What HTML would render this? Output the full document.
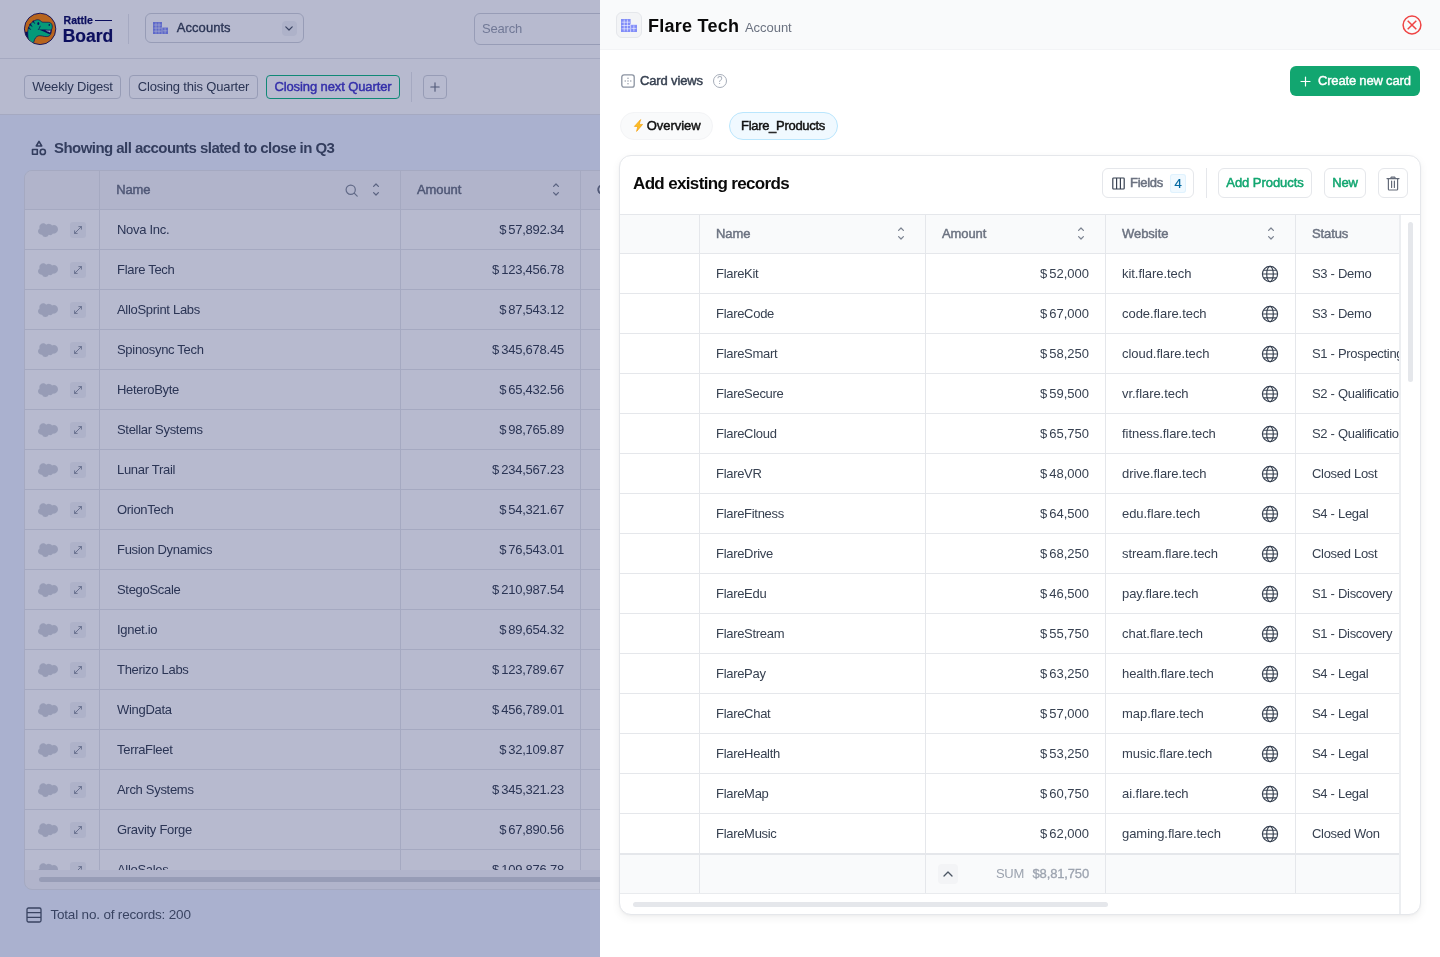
<!DOCTYPE html><html lang="en"><head><meta charset="utf-8"><title>Rattle Board</title><style>*{box-sizing:border-box;margin:0;padding:0}
html,body{width:1440px;height:957px;overflow:hidden;background:#ecf3ff;font-family:"Liberation Sans",sans-serif;font-size:13px;color:#374151;letter-spacing:-.3px}
svg{display:block}
i{font-style:normal}
#page{position:absolute;left:0;top:0;width:1440px;height:957px;background:#ecf3ff}
#overlay{position:absolute;left:0;top:0;width:1440px;height:957px;background:rgba(18,25,95,.3)}
#hdr{position:absolute;left:0;top:0;width:1440px;height:59px;background:#fff;border-bottom:1px solid #e5e7eb}
#logo{position:absolute;left:20px;top:9px}
#rattle{position:absolute;left:63.500px;top:13.700px;font-size:10.500px;font-weight:700;color:#0b0b5e;line-height:13px;letter-spacing:.05px;-webkit-text-stroke:.25px #0b0b5e}
#rline{position:absolute;left:95px;top:20px;width:17px;height:1px;background:#0b0b5e}
#board{position:absolute;left:62.700px;top:25.900px;font-size:17.500px;font-weight:700;color:#0b0b5e;line-height:20px;letter-spacing:0;-webkit-text-stroke:.2px #0b0b5e}
#hdiv{position:absolute;left:128px;top:14px;width:1px;height:30px;background:#e5e7eb}
#acct{position:absolute;left:145px;top:13px;width:159px;height:30px;border:1px solid #d1d5db;border-radius:6px;background:#fff}
#acct .bi{position:absolute;left:7px;top:8px;color:#818cf8}
#acct .at{position:absolute;left:30.800px;top:0;line-height:28px;font-size:13px;font-weight:400;color:#374151;letter-spacing:.05px;-webkit-text-stroke:.35px #374151}
#acct .chev{position:absolute;left:135.500px;top:6.500px;width:15px;height:15px;border-radius:4px;background:#f3f4f6;color:#4b5563}
#acct .chev svg{position:absolute;left:3.500px;top:5.200px}
#search{position:absolute;left:474px;top:13px;width:400px;height:32px;border:1px solid #d1d5db;border-radius:6px;background:#fff;color:#9ca3af;line-height:30px;padding-left:7px;font-size:13px;letter-spacing:-.2px}
#tabs{position:absolute;left:0;top:59px;width:1440px;height:56px;background:#fff;border-bottom:1px solid #e5e7eb}
.tab{position:absolute;top:16px;height:24px;border:1px solid #d1d5db;border-radius:4px;background:#fff;font-size:13px;line-height:22px;text-align:center;color:#374151;white-space:nowrap;letter-spacing:-.17px}
.tab.act{border-color:#10b981;color:#4338ca;letter-spacing:-.1px;-webkit-text-stroke:.45px #4338ca}
.tab.plus{color:#6b7280}
.tab.plus svg{position:absolute;left:6px;top:6px}
#tdiv{position:absolute;left:411px;top:13px;width:1px;height:30px;background:#e5e7eb}
#lhead{position:absolute;left:0;top:139px;height:18px;color:#434c5e}
#lhead svg{position:absolute;left:31px;top:1px}
#lhead span{position:absolute;left:54px;top:0;white-space:nowrap;font-size:15px;font-weight:700;line-height:18px;letter-spacing:-.55px;color:#434c5e}
#ltable{position:absolute;left:24px;top:170px;width:1400px;height:720px;border:1px solid #e5e7eb;border-radius:8px;background:#f6f7f9;overflow:hidden}
#lclip{position:absolute;left:0;top:0;width:1400px;height:699px;overflow:hidden}
.lrow{position:absolute;left:0;width:1400px;height:40px;border-bottom:1px solid #e5e7eb;background:#fff}
.lrow.lh{top:0;height:39px;background:#f6f7f9;color:#6b7280}
.lrow.lh>div{height:39px}
.lrow.lh span{line-height:38px}
.lrow>div{position:absolute;top:0;height:40px;border-right:1px solid #e5e7eb}
.lrow>div.c0>div{border:0}
.lrow span{position:absolute;top:0;line-height:39px;white-space:nowrap}
.lh span{-webkit-text-stroke:.45px currentColor;letter-spacing:-.1px}
.c0{left:0;width:75px}
.c1{left:75px;width:301px}
.c2{left:376px;width:180px}
.c3{left:556px;width:200px}
.c1 span{left:17px}
.lh .c1 span{left:16.200px}
.c2 span{left:16px}
.c3 span{left:16px}
.c2 span.amt{left:auto;right:16px;letter-spacing:-.22px}
.amt i{margin-right:2px}
.sf{position:absolute;left:13px;top:13px;width:20px;height:14px;color:#d1d5db}
.exp{position:absolute;left:45px;top:12px;width:16px;height:16px;border-radius:3px;background:#f3f4f6;color:#8b93a1}
.exp svg{position:absolute;left:3px;top:3px}
.sort{position:absolute;right:21px;top:12px;color:#7c8391}
.mag{position:absolute;right:42px;top:12.500px;color:#868d9a}
#lscroll{position:absolute;left:13.500px;top:706px;width:1200px;height:5px;border-radius:3px;background:#d1d5db}
#lfoot{position:absolute;left:0;top:906px;height:18px;color:#4b5563}
#lfoot svg{position:absolute;left:26px;top:1px}
#lfoot span{position:absolute;left:50.400px;top:0;line-height:18px;white-space:nowrap;font-size:13.500px;letter-spacing:-.18px}
/* panel */
#panel{position:absolute;left:600px;top:0;width:840px;height:957px;background:#fff}
#phdr{position:absolute;left:0;top:0;width:840px;height:50px;background:#f9fafb;border-bottom:1px solid #f3f4f6}
#pico{position:absolute;left:16px;top:12px;width:26px;height:26px;border:1px solid #e5e7eb;border-radius:6px;background:#f3f4f6;color:#818cf8}
#pico svg{position:absolute;left:4px;top:5.500px}
#ptitle{position:absolute;left:48px;top:13px;font-size:18px;font-weight:700;line-height:26px;color:#0a0a0a;letter-spacing:.25px;white-space:nowrap}
#psub{position:absolute;left:145px;top:19px;font-size:13px;line-height:18px;color:#6b7280;letter-spacing:-.05px}
#pclose{position:absolute;left:802px;top:15px;color:#ef4444}
#cv{position:absolute;left:0;top:71px;height:20px;color:#374151}
#cv svg{position:absolute;left:21px;top:3px;color:#8b93a1}
#cv span{position:absolute;left:40px;top:0;line-height:20px;white-space:nowrap;font-size:13px;letter-spacing:-.15px;-webkit-text-stroke:.45px currentColor}
#cv #qm{left:112.8px;top:2.8px;width:14px;height:14px;border:1px solid #a6adb9;border-radius:50%;font-size:10px;line-height:12px;text-align:center;color:#a6adb9;letter-spacing:0;-webkit-text-stroke:0}
#create{position:absolute;left:690px;top:66px;width:130px;height:30px;border-radius:6px;background:#12a670;color:#fff}
#create svg{position:absolute;left:10px;top:9.500px}
#create span{position:absolute;left:28px;top:0;line-height:30px;font-size:13px;white-space:nowrap;letter-spacing:-.18px;-webkit-text-stroke:.4px #fff}
.pill{position:absolute;top:112px;height:28px;border-radius:14px;font-size:13px;color:#111;white-space:nowrap}
.pill span{position:absolute;top:0;line-height:26px;-webkit-text-stroke:.45px #111}
#p1{left:20px;width:93px;background:#f9fafb;border:1px solid #f3f4f6}
#p1 svg{position:absolute;left:11.500px;top:5.500px}
#p1 span{left:25.800px;letter-spacing:-.05px}
#p2{left:129px;width:109px;background:#f0f9ff;border:1px solid #bae6fd}
#p2 span{left:11px}
#card{position:absolute;left:19px;top:155px;width:802px;height:760px;border:1px solid #e5e7eb;border-radius:12px;background:#fff;box-shadow:0 3px 8px rgba(0,0,0,.06),0 1px 2px rgba(0,0,0,.03)}
#ctitle{position:absolute;left:13px;top:16px;font-size:17px;font-weight:700;line-height:24px;color:#0a0a0a;letter-spacing:-.65px;white-space:nowrap}
.btn{position:absolute;top:12px;height:30px;border:1px solid #e5e7eb;border-radius:6px;background:#fff;font-size:13px;line-height:28px;text-align:center;white-space:nowrap;color:#6b7280;-webkit-text-stroke:.5px currentColor}
.btn.g{color:#12a670}
#bfields{left:482px;width:92px}
#bfields svg{position:absolute;left:9px;top:8px;color:#374151}
#bfields span{position:absolute;left:27px;top:0}
#bfields b{position:absolute;left:67px;top:5px;width:16px;height:19px;border-radius:3px;background:#f0f9ff;color:#0369a1;font-weight:400;line-height:19px;-webkit-text-stroke:.2px #0369a1;box-shadow:inset 0 0 0 1px #e0f2fe}
#bdiv{position:absolute;left:586px;top:12px;width:1px;height:30px;background:#e5e7eb}
#badd{left:598px;width:94px;letter-spacing:-.05px}
#bnew{left:704px;width:42px;letter-spacing:-.2px}
#btrash{left:758px;width:30px;color:#646b79}
#btrash svg{position:absolute;left:7px;top:7px}
#rt{position:absolute;left:0;top:58px;width:779px;height:701px;overflow:hidden;border-top:1px solid #e5e7eb}
#rvl{position:absolute;left:779px;top:59px;width:2px;height:699px;background:#eceef1}
#rtop{position:absolute;left:0;top:58px;width:800px;height:1px;background:#e5e7eb}
.rrow{position:absolute;left:0;width:800px;height:40px;border-bottom:1px solid #e5e7eb;background:#fff}
.rrow.rh{top:0;height:39px;background:#f9fafb;color:#6b7280}
.rrow.rh>div{height:39px}
.rrow.rh span{line-height:38px}
.rh span{-webkit-text-stroke:.45px currentColor;letter-spacing:-.1px}
.rrow.rf{background:#f9fafb;border-top:2px solid #e5e7eb;border-bottom:1px solid #e9ebee;height:41px}
.rrow.rf>div{height:38px}
.rrow.rf span{line-height:37px}
.rrow>div{position:absolute;top:0;height:40px;border-right:1px solid #e5e7eb}
.rrow span{position:absolute;top:0;line-height:39px;white-space:nowrap}
.d0{left:0;width:80px}
.d1{left:80px;width:226px}
.d2{left:306px;width:180px}
.d3{left:486px;width:190px}
.d4{left:676px;width:200px}
.d1 span,.d2 span,.d3 span,.d4 span{left:16px}
.d2 span.amt{left:auto;right:16px;letter-spacing:0}
.d3 span{letter-spacing:-.05px}
.globe{position:absolute;left:155px;top:11px;color:#374151}
.rf .up{left:12px!important;top:9px!important;width:20px;height:20px;border-radius:4px;background:#f3f4f6;color:#4b5563}
.rf .up svg{position:absolute;left:5px;top:7px}
.rf .sum{left:auto!important;right:81px;color:#9ca3af;font-size:13px}
.rf .sv{left:auto!important;right:16px;color:#9ca3af;letter-spacing:-.15px;-webkit-text-stroke:.3px #9ca3af}
#vs{position:absolute;left:787.500px;top:66px;width:5px;height:160px;border-radius:3px;background:#e5e7eb}
#hs{position:absolute;left:13px;top:746px;width:475px;height:5px;border-radius:3px;background:#e5e7eb}

#root{position:absolute;left:0;top:0;width:1440px;height:957px;will-change:transform}
</style></head><body><div id="root">
<div id="page">
<div id="hdr">
<svg id="logo" width="40" height="40" viewBox="0 0 40 40">
<circle cx="20.100" cy="19.900" r="15.700" fill="#ff8400" stroke="#0a0a5a" stroke-width=".9"/>
<clipPath id="lc"><circle cx="20.100" cy="19.900" r="15.300"/></clipPath>
<g clip-path="url(#lc)">
<path d="M4.500 23L8.600 22.500V29L5.500 27.500z" fill="#0a0a5a"/>
<path d="M13.300 36C13.800 31.500 15 28.800 17 27.400C18.500 26.500 20.500 26.700 22.500 27.100C25 27.600 27.500 28 29.200 26.900C30.300 26.100 30.900 25 31 23.600L31.300 21C32.300 19.600 32.600 17.500 32 15.800C31.400 14.200 30.200 13.400 28.800 13.300L23 13.200C21.800 13.200 21.200 12.400 20.200 11.600C19 10.600 17.500 10.500 16 11L14.400 11.600C11.500 13 9 16.500 8 20.300C7.600 23 7.600 27 8.300 29.800L5 33L13.300 36z" fill="#00d084" stroke="#0a0a5a" stroke-width=".7" stroke-linejoin="round"/>
<path d="M18.600 20.400C22 20.400 27 20.600 31.700 20.700L31.100 24.300L29.800 25.300C26.500 23.800 23 21.800 18.600 20.400z" fill="#0a0a5a"/>
<path d="M12.300 12.200L13.500 11.600L14.800 14.800zM9.300 15.800L10.400 14.500L12.300 17.700zM8.100 19.300L8.600 18L11 20.800z" fill="#0a0a5a" stroke="#0a0a5a" stroke-width=".3" stroke-linejoin="round"/>
<path d="M25.300 21.400L30.600 21.400L30 23.400L27.600 22.600z" fill="#fff"/>
<path d="M27 21.200v1.300M28.800 21.200v1.800" stroke="#0a0a5a" stroke-width=".4"/>
<path d="M20.200 17.200C19.800 18.600 19.200 19.800 18.400 20.600" fill="none" stroke="#0a0a5a" stroke-width=".8" stroke-linecap="round"/>
<ellipse cx="18.300" cy="14.500" rx="1" ry="1.500" fill="#0a0a5a"/><ellipse cx="29.300" cy="15.900" rx=".8" ry=".9" fill="#0a0a5a"/>
</g></svg>
<div id="rattle">Rattle</div><div id="rline"></div><div id="board">Board</div><div id="hdiv"></div>
<div id="acct"><span class="bi"><svg width="15" height="12.19" viewBox="0 0 16 13"><path fill="currentColor" d="M0 0h9.600v13H0zM9.600 5.600H16V13H9.600z"/><path d="M3.200 .6v11.800M6.400 .6v11.800M.6 3.200h8.400M.6 6.500h8.400M.6 9.800h8.400M12.900 6.400v6M10.400 9.400h5M9.600 5.200V13M9.600 5.600H16" stroke="#fff" stroke-opacity=".72" stroke-width=".8" fill="none"/></svg></span><span class="at">Accounts</span><span class="chev"><svg width="8" height="5" viewBox="0 0 8 5"><path d="M.8 .8l3.200 3.200L7.200 .8" fill="none" stroke="currentColor" stroke-width="1.200" stroke-linecap="round" stroke-linejoin="round"/></svg></span></div>
<div id="search">Search</div>
</div>
<div id="tabs"><span class="tab" style="left:24px;width:97px">Weekly Digest</span><span class="tab" style="left:129px;width:129px">Closing this Quarter</span><span class="tab act" style="left:266px;width:134px">Closing next Quarter</span><span id="tdiv"></span><span class="tab plus" style="left:423px;width:24px"><svg width="10" height="10" viewBox="0 0 10 10"><path d="M5 .8v8.400M.8 5h8.400" stroke="currentColor" stroke-width="1.100" stroke-linecap="round"/></svg></span></div>
<div id="lhead"><svg width="16" height="16" viewBox="0 0 16 16" fill="none" stroke="currentColor" stroke-width="1.600" stroke-linejoin="round"><path d="M8 1.400l2.700 4.600H5.300z"/><rect x="1.500" y="9.500" width="4.800" height="4.800"/><circle cx="11.800" cy="11.900" r="2.600"/></svg><span>Showing all accounts slated to close in Q3</span></div>
<div id="ltable"><div id="lclip">
<div class="lrow lh"><div class="c0"></div><div class="c1"><span>Name</span><svg class="mag" width="13" height="13" viewBox="0 0 13 13" fill="none" stroke="currentColor" stroke-width="1.200" stroke-linecap="round"><circle cx="5.700" cy="5.700" r="4.600"/><path d="M9.200 9.200l3 3"/></svg><svg class="sort" width="6" height="13" viewBox="0 0 6 13"><path d="M0.6 3.4 L3 1 L5.4 3.4 M0.6 9.6 L3 12 L5.4 9.6" fill="none" stroke="currentColor" stroke-width="1.25" stroke-linecap="round" stroke-linejoin="round"/></svg></div><div class="c2"><span>Amount</span><svg class="sort" width="6" height="13" viewBox="0 0 6 13"><path d="M0.6 3.4 L3 1 L5.4 3.4 M0.6 9.6 L3 12 L5.4 9.6" fill="none" stroke="currentColor" stroke-width="1.25" stroke-linecap="round" stroke-linejoin="round"/></svg></div><div class="c3"><span>C</span></div></div>
<div class="lrow" style="top:39px"><div class="c0"><svg class="sf" width="22" height="15" viewBox="0 0 22 15"><path d="M9.1 1.7a3.9 3.9 0 0 1 2.8-1.2c1.5 0 2.8.8 3.5 2a4.7 4.7 0 0 1 1.9-.4c2.6 0 4.7 2.100 4.700 4.700s-2.100 4.700-4.700 4.700c-.3 0-.6 0-.9-.1a3.500 3.500 0 0 1-4.600 1.400 4 4 0 0 1-7.400-.2 3.600 3.600 0 0 1-.8.100C1.600 12.700 0 11 0 9c0-1.400.7-2.600 1.800-3.200a4.200 4.200 0 0 1-.3-1.600C1.500 1.900 3.400 0 5.800 0c1.300 0 2.500.7 3.300 1.700z" fill="currentColor"/></svg><div class="exp"><svg width="10" height="10" viewBox="0 0 10 10"><path d="M1.6 8.4 L8.4 1.6 M5.8 1.6 H8.4 V4.2 M4.2 8.4 H1.6 V5.8" fill="none" stroke="currentColor" stroke-width="0.95" stroke-linecap="round" stroke-linejoin="round"/></svg></div></div><div class="c1"><span>Nova Inc.</span></div><div class="c2"><span class="amt"><i>$</i>57,892.34</span></div><div class="c3"></div></div>
<div class="lrow" style="top:79px"><div class="c0"><svg class="sf" width="22" height="15" viewBox="0 0 22 15"><path d="M9.1 1.7a3.9 3.9 0 0 1 2.8-1.2c1.5 0 2.8.8 3.5 2a4.7 4.7 0 0 1 1.9-.4c2.6 0 4.7 2.100 4.700 4.700s-2.100 4.700-4.700 4.700c-.3 0-.6 0-.9-.1a3.500 3.500 0 0 1-4.600 1.400 4 4 0 0 1-7.400-.2 3.600 3.600 0 0 1-.8.100C1.600 12.700 0 11 0 9c0-1.400.7-2.600 1.800-3.200a4.200 4.200 0 0 1-.3-1.600C1.500 1.900 3.400 0 5.800 0c1.300 0 2.500.7 3.300 1.700z" fill="currentColor"/></svg><div class="exp"><svg width="10" height="10" viewBox="0 0 10 10"><path d="M1.6 8.4 L8.4 1.6 M5.8 1.6 H8.4 V4.2 M4.2 8.4 H1.6 V5.8" fill="none" stroke="currentColor" stroke-width="0.95" stroke-linecap="round" stroke-linejoin="round"/></svg></div></div><div class="c1"><span>Flare Tech</span></div><div class="c2"><span class="amt"><i>$</i>123,456.78</span></div><div class="c3"></div></div>
<div class="lrow" style="top:119px"><div class="c0"><svg class="sf" width="22" height="15" viewBox="0 0 22 15"><path d="M9.1 1.7a3.9 3.9 0 0 1 2.8-1.2c1.5 0 2.8.8 3.5 2a4.7 4.7 0 0 1 1.9-.4c2.6 0 4.7 2.100 4.700 4.700s-2.100 4.700-4.700 4.700c-.3 0-.6 0-.9-.1a3.500 3.500 0 0 1-4.600 1.400 4 4 0 0 1-7.400-.2 3.600 3.600 0 0 1-.8.100C1.600 12.700 0 11 0 9c0-1.400.7-2.600 1.800-3.200a4.200 4.200 0 0 1-.3-1.600C1.500 1.900 3.400 0 5.800 0c1.300 0 2.500.7 3.300 1.700z" fill="currentColor"/></svg><div class="exp"><svg width="10" height="10" viewBox="0 0 10 10"><path d="M1.6 8.4 L8.4 1.6 M5.8 1.6 H8.4 V4.2 M4.2 8.4 H1.6 V5.8" fill="none" stroke="currentColor" stroke-width="0.95" stroke-linecap="round" stroke-linejoin="round"/></svg></div></div><div class="c1"><span>AlloSprint Labs</span></div><div class="c2"><span class="amt"><i>$</i>87,543.12</span></div><div class="c3"></div></div>
<div class="lrow" style="top:159px"><div class="c0"><svg class="sf" width="22" height="15" viewBox="0 0 22 15"><path d="M9.1 1.7a3.9 3.9 0 0 1 2.8-1.2c1.5 0 2.8.8 3.5 2a4.7 4.7 0 0 1 1.9-.4c2.6 0 4.7 2.100 4.700 4.700s-2.100 4.700-4.700 4.700c-.3 0-.6 0-.9-.1a3.500 3.500 0 0 1-4.600 1.400 4 4 0 0 1-7.400-.2 3.600 3.600 0 0 1-.8.100C1.600 12.700 0 11 0 9c0-1.400.7-2.600 1.800-3.200a4.200 4.200 0 0 1-.3-1.600C1.500 1.900 3.400 0 5.800 0c1.300 0 2.500.7 3.300 1.700z" fill="currentColor"/></svg><div class="exp"><svg width="10" height="10" viewBox="0 0 10 10"><path d="M1.6 8.4 L8.4 1.6 M5.8 1.6 H8.4 V4.2 M4.2 8.4 H1.6 V5.8" fill="none" stroke="currentColor" stroke-width="0.95" stroke-linecap="round" stroke-linejoin="round"/></svg></div></div><div class="c1"><span>Spinosync Tech</span></div><div class="c2"><span class="amt"><i>$</i>345,678.45</span></div><div class="c3"></div></div>
<div class="lrow" style="top:199px"><div class="c0"><svg class="sf" width="22" height="15" viewBox="0 0 22 15"><path d="M9.1 1.7a3.9 3.9 0 0 1 2.8-1.2c1.5 0 2.8.8 3.5 2a4.7 4.7 0 0 1 1.9-.4c2.6 0 4.7 2.100 4.700 4.700s-2.100 4.700-4.700 4.700c-.3 0-.6 0-.9-.1a3.500 3.500 0 0 1-4.600 1.400 4 4 0 0 1-7.400-.2 3.600 3.600 0 0 1-.8.100C1.600 12.700 0 11 0 9c0-1.400.7-2.600 1.800-3.200a4.200 4.200 0 0 1-.3-1.600C1.500 1.900 3.400 0 5.800 0c1.300 0 2.500.7 3.300 1.700z" fill="currentColor"/></svg><div class="exp"><svg width="10" height="10" viewBox="0 0 10 10"><path d="M1.6 8.4 L8.4 1.6 M5.8 1.6 H8.4 V4.2 M4.2 8.4 H1.6 V5.8" fill="none" stroke="currentColor" stroke-width="0.95" stroke-linecap="round" stroke-linejoin="round"/></svg></div></div><div class="c1"><span>HeteroByte</span></div><div class="c2"><span class="amt"><i>$</i>65,432.56</span></div><div class="c3"></div></div>
<div class="lrow" style="top:239px"><div class="c0"><svg class="sf" width="22" height="15" viewBox="0 0 22 15"><path d="M9.1 1.7a3.9 3.9 0 0 1 2.8-1.2c1.5 0 2.8.8 3.5 2a4.7 4.7 0 0 1 1.9-.4c2.6 0 4.7 2.100 4.700 4.700s-2.100 4.700-4.700 4.700c-.3 0-.6 0-.9-.1a3.500 3.500 0 0 1-4.600 1.400 4 4 0 0 1-7.400-.2 3.600 3.600 0 0 1-.8.100C1.600 12.700 0 11 0 9c0-1.400.7-2.600 1.800-3.200a4.200 4.200 0 0 1-.3-1.600C1.500 1.900 3.400 0 5.800 0c1.300 0 2.500.7 3.300 1.700z" fill="currentColor"/></svg><div class="exp"><svg width="10" height="10" viewBox="0 0 10 10"><path d="M1.6 8.4 L8.4 1.6 M5.8 1.6 H8.4 V4.2 M4.2 8.4 H1.6 V5.8" fill="none" stroke="currentColor" stroke-width="0.95" stroke-linecap="round" stroke-linejoin="round"/></svg></div></div><div class="c1"><span>Stellar Systems</span></div><div class="c2"><span class="amt"><i>$</i>98,765.89</span></div><div class="c3"></div></div>
<div class="lrow" style="top:279px"><div class="c0"><svg class="sf" width="22" height="15" viewBox="0 0 22 15"><path d="M9.1 1.7a3.9 3.9 0 0 1 2.8-1.2c1.5 0 2.8.8 3.5 2a4.7 4.7 0 0 1 1.9-.4c2.6 0 4.7 2.100 4.700 4.700s-2.100 4.700-4.700 4.700c-.3 0-.6 0-.9-.1a3.500 3.500 0 0 1-4.600 1.400 4 4 0 0 1-7.400-.2 3.600 3.600 0 0 1-.8.100C1.600 12.700 0 11 0 9c0-1.400.7-2.600 1.800-3.200a4.200 4.200 0 0 1-.3-1.600C1.500 1.900 3.400 0 5.800 0c1.300 0 2.500.7 3.300 1.700z" fill="currentColor"/></svg><div class="exp"><svg width="10" height="10" viewBox="0 0 10 10"><path d="M1.6 8.4 L8.4 1.6 M5.8 1.6 H8.4 V4.2 M4.2 8.4 H1.6 V5.8" fill="none" stroke="currentColor" stroke-width="0.95" stroke-linecap="round" stroke-linejoin="round"/></svg></div></div><div class="c1"><span>Lunar Trail</span></div><div class="c2"><span class="amt"><i>$</i>234,567.23</span></div><div class="c3"></div></div>
<div class="lrow" style="top:319px"><div class="c0"><svg class="sf" width="22" height="15" viewBox="0 0 22 15"><path d="M9.1 1.7a3.9 3.9 0 0 1 2.8-1.2c1.5 0 2.8.8 3.5 2a4.7 4.7 0 0 1 1.9-.4c2.6 0 4.7 2.100 4.700 4.700s-2.100 4.700-4.700 4.700c-.3 0-.6 0-.9-.1a3.500 3.500 0 0 1-4.600 1.400 4 4 0 0 1-7.400-.2 3.600 3.600 0 0 1-.8.100C1.600 12.700 0 11 0 9c0-1.400.7-2.600 1.800-3.200a4.200 4.200 0 0 1-.3-1.600C1.500 1.900 3.400 0 5.800 0c1.300 0 2.500.7 3.300 1.700z" fill="currentColor"/></svg><div class="exp"><svg width="10" height="10" viewBox="0 0 10 10"><path d="M1.6 8.4 L8.4 1.6 M5.8 1.6 H8.4 V4.2 M4.2 8.4 H1.6 V5.8" fill="none" stroke="currentColor" stroke-width="0.95" stroke-linecap="round" stroke-linejoin="round"/></svg></div></div><div class="c1"><span>OrionTech</span></div><div class="c2"><span class="amt"><i>$</i>54,321.67</span></div><div class="c3"></div></div>
<div class="lrow" style="top:359px"><div class="c0"><svg class="sf" width="22" height="15" viewBox="0 0 22 15"><path d="M9.1 1.7a3.9 3.9 0 0 1 2.8-1.2c1.5 0 2.8.8 3.5 2a4.7 4.7 0 0 1 1.9-.4c2.6 0 4.7 2.100 4.700 4.700s-2.100 4.700-4.700 4.700c-.3 0-.6 0-.9-.1a3.500 3.500 0 0 1-4.600 1.400 4 4 0 0 1-7.400-.2 3.600 3.600 0 0 1-.8.100C1.600 12.700 0 11 0 9c0-1.400.7-2.600 1.800-3.200a4.200 4.200 0 0 1-.3-1.600C1.500 1.900 3.400 0 5.800 0c1.300 0 2.500.7 3.300 1.700z" fill="currentColor"/></svg><div class="exp"><svg width="10" height="10" viewBox="0 0 10 10"><path d="M1.6 8.4 L8.4 1.6 M5.8 1.6 H8.4 V4.2 M4.2 8.4 H1.6 V5.8" fill="none" stroke="currentColor" stroke-width="0.95" stroke-linecap="round" stroke-linejoin="round"/></svg></div></div><div class="c1"><span>Fusion Dynamics</span></div><div class="c2"><span class="amt"><i>$</i>76,543.01</span></div><div class="c3"></div></div>
<div class="lrow" style="top:399px"><div class="c0"><svg class="sf" width="22" height="15" viewBox="0 0 22 15"><path d="M9.1 1.7a3.9 3.9 0 0 1 2.8-1.2c1.5 0 2.8.8 3.5 2a4.7 4.7 0 0 1 1.9-.4c2.6 0 4.7 2.100 4.700 4.700s-2.100 4.700-4.700 4.700c-.3 0-.6 0-.9-.1a3.500 3.500 0 0 1-4.600 1.400 4 4 0 0 1-7.400-.2 3.600 3.600 0 0 1-.8.100C1.600 12.700 0 11 0 9c0-1.400.7-2.600 1.800-3.200a4.200 4.200 0 0 1-.3-1.600C1.500 1.900 3.400 0 5.800 0c1.300 0 2.500.7 3.300 1.700z" fill="currentColor"/></svg><div class="exp"><svg width="10" height="10" viewBox="0 0 10 10"><path d="M1.6 8.4 L8.4 1.6 M5.8 1.6 H8.4 V4.2 M4.2 8.4 H1.6 V5.8" fill="none" stroke="currentColor" stroke-width="0.95" stroke-linecap="round" stroke-linejoin="round"/></svg></div></div><div class="c1"><span>StegoScale</span></div><div class="c2"><span class="amt"><i>$</i>210,987.54</span></div><div class="c3"></div></div>
<div class="lrow" style="top:439px"><div class="c0"><svg class="sf" width="22" height="15" viewBox="0 0 22 15"><path d="M9.1 1.7a3.9 3.9 0 0 1 2.8-1.2c1.5 0 2.8.8 3.5 2a4.7 4.7 0 0 1 1.9-.4c2.6 0 4.7 2.100 4.700 4.700s-2.100 4.700-4.700 4.700c-.3 0-.6 0-.9-.1a3.500 3.500 0 0 1-4.600 1.400 4 4 0 0 1-7.400-.2 3.600 3.600 0 0 1-.8.100C1.600 12.700 0 11 0 9c0-1.400.7-2.600 1.800-3.200a4.200 4.200 0 0 1-.3-1.600C1.500 1.900 3.400 0 5.800 0c1.300 0 2.500.7 3.300 1.700z" fill="currentColor"/></svg><div class="exp"><svg width="10" height="10" viewBox="0 0 10 10"><path d="M1.6 8.4 L8.4 1.6 M5.8 1.6 H8.4 V4.2 M4.2 8.4 H1.6 V5.8" fill="none" stroke="currentColor" stroke-width="0.95" stroke-linecap="round" stroke-linejoin="round"/></svg></div></div><div class="c1"><span>Ignet.io</span></div><div class="c2"><span class="amt"><i>$</i>89,654.32</span></div><div class="c3"></div></div>
<div class="lrow" style="top:479px"><div class="c0"><svg class="sf" width="22" height="15" viewBox="0 0 22 15"><path d="M9.1 1.7a3.9 3.9 0 0 1 2.8-1.2c1.5 0 2.8.8 3.5 2a4.7 4.7 0 0 1 1.9-.4c2.6 0 4.7 2.100 4.700 4.700s-2.100 4.700-4.700 4.700c-.3 0-.6 0-.9-.1a3.500 3.500 0 0 1-4.600 1.400 4 4 0 0 1-7.400-.2 3.600 3.600 0 0 1-.8.100C1.600 12.700 0 11 0 9c0-1.400.7-2.600 1.800-3.200a4.200 4.200 0 0 1-.3-1.600C1.500 1.900 3.400 0 5.800 0c1.300 0 2.500.7 3.300 1.700z" fill="currentColor"/></svg><div class="exp"><svg width="10" height="10" viewBox="0 0 10 10"><path d="M1.6 8.4 L8.4 1.6 M5.8 1.6 H8.4 V4.2 M4.2 8.4 H1.6 V5.8" fill="none" stroke="currentColor" stroke-width="0.95" stroke-linecap="round" stroke-linejoin="round"/></svg></div></div><div class="c1"><span>Therizo Labs</span></div><div class="c2"><span class="amt"><i>$</i>123,789.67</span></div><div class="c3"></div></div>
<div class="lrow" style="top:519px"><div class="c0"><svg class="sf" width="22" height="15" viewBox="0 0 22 15"><path d="M9.1 1.7a3.9 3.9 0 0 1 2.8-1.2c1.5 0 2.8.8 3.5 2a4.7 4.7 0 0 1 1.9-.4c2.6 0 4.7 2.100 4.700 4.700s-2.100 4.700-4.700 4.700c-.3 0-.6 0-.9-.1a3.500 3.500 0 0 1-4.600 1.400 4 4 0 0 1-7.400-.2 3.600 3.600 0 0 1-.8.100C1.600 12.700 0 11 0 9c0-1.400.7-2.600 1.800-3.200a4.200 4.200 0 0 1-.3-1.600C1.500 1.900 3.400 0 5.800 0c1.300 0 2.500.7 3.300 1.700z" fill="currentColor"/></svg><div class="exp"><svg width="10" height="10" viewBox="0 0 10 10"><path d="M1.6 8.4 L8.4 1.6 M5.8 1.6 H8.4 V4.2 M4.2 8.4 H1.6 V5.8" fill="none" stroke="currentColor" stroke-width="0.95" stroke-linecap="round" stroke-linejoin="round"/></svg></div></div><div class="c1"><span>WingData</span></div><div class="c2"><span class="amt"><i>$</i>456,789.01</span></div><div class="c3"></div></div>
<div class="lrow" style="top:559px"><div class="c0"><svg class="sf" width="22" height="15" viewBox="0 0 22 15"><path d="M9.1 1.7a3.9 3.9 0 0 1 2.8-1.2c1.5 0 2.8.8 3.5 2a4.7 4.7 0 0 1 1.9-.4c2.6 0 4.7 2.100 4.700 4.700s-2.100 4.700-4.700 4.700c-.3 0-.6 0-.9-.1a3.500 3.500 0 0 1-4.600 1.400 4 4 0 0 1-7.400-.2 3.600 3.600 0 0 1-.8.100C1.600 12.700 0 11 0 9c0-1.400.7-2.600 1.800-3.200a4.200 4.200 0 0 1-.3-1.600C1.500 1.900 3.400 0 5.800 0c1.300 0 2.500.7 3.300 1.700z" fill="currentColor"/></svg><div class="exp"><svg width="10" height="10" viewBox="0 0 10 10"><path d="M1.6 8.4 L8.4 1.6 M5.8 1.6 H8.4 V4.2 M4.2 8.4 H1.6 V5.8" fill="none" stroke="currentColor" stroke-width="0.95" stroke-linecap="round" stroke-linejoin="round"/></svg></div></div><div class="c1"><span>TerraFleet</span></div><div class="c2"><span class="amt"><i>$</i>32,109.87</span></div><div class="c3"></div></div>
<div class="lrow" style="top:599px"><div class="c0"><svg class="sf" width="22" height="15" viewBox="0 0 22 15"><path d="M9.1 1.7a3.9 3.9 0 0 1 2.8-1.2c1.5 0 2.8.8 3.5 2a4.7 4.7 0 0 1 1.9-.4c2.6 0 4.7 2.100 4.700 4.700s-2.100 4.700-4.700 4.700c-.3 0-.6 0-.9-.1a3.500 3.500 0 0 1-4.600 1.400 4 4 0 0 1-7.400-.2 3.600 3.600 0 0 1-.8.100C1.600 12.700 0 11 0 9c0-1.400.7-2.600 1.800-3.200a4.200 4.200 0 0 1-.3-1.600C1.500 1.900 3.400 0 5.800 0c1.300 0 2.500.7 3.300 1.700z" fill="currentColor"/></svg><div class="exp"><svg width="10" height="10" viewBox="0 0 10 10"><path d="M1.6 8.4 L8.4 1.6 M5.8 1.6 H8.4 V4.2 M4.2 8.4 H1.6 V5.8" fill="none" stroke="currentColor" stroke-width="0.95" stroke-linecap="round" stroke-linejoin="round"/></svg></div></div><div class="c1"><span>Arch Systems</span></div><div class="c2"><span class="amt"><i>$</i>345,321.23</span></div><div class="c3"></div></div>
<div class="lrow" style="top:639px"><div class="c0"><svg class="sf" width="22" height="15" viewBox="0 0 22 15"><path d="M9.1 1.7a3.9 3.9 0 0 1 2.8-1.2c1.5 0 2.8.8 3.5 2a4.7 4.7 0 0 1 1.9-.4c2.6 0 4.7 2.100 4.700 4.700s-2.100 4.700-4.700 4.700c-.3 0-.6 0-.9-.1a3.500 3.500 0 0 1-4.600 1.400 4 4 0 0 1-7.400-.2 3.600 3.600 0 0 1-.8.100C1.600 12.700 0 11 0 9c0-1.400.7-2.600 1.800-3.200a4.200 4.200 0 0 1-.3-1.600C1.500 1.900 3.400 0 5.800 0c1.300 0 2.500.7 3.300 1.700z" fill="currentColor"/></svg><div class="exp"><svg width="10" height="10" viewBox="0 0 10 10"><path d="M1.6 8.4 L8.4 1.6 M5.8 1.6 H8.4 V4.2 M4.2 8.4 H1.6 V5.8" fill="none" stroke="currentColor" stroke-width="0.95" stroke-linecap="round" stroke-linejoin="round"/></svg></div></div><div class="c1"><span>Gravity Forge</span></div><div class="c2"><span class="amt"><i>$</i>67,890.56</span></div><div class="c3"></div></div>
<div class="lrow" style="top:679px"><div class="c0"><svg class="sf" width="22" height="15" viewBox="0 0 22 15"><path d="M9.1 1.7a3.9 3.9 0 0 1 2.8-1.2c1.5 0 2.8.8 3.5 2a4.7 4.7 0 0 1 1.9-.4c2.6 0 4.7 2.100 4.700 4.700s-2.100 4.700-4.700 4.700c-.3 0-.6 0-.9-.1a3.500 3.500 0 0 1-4.600 1.400 4 4 0 0 1-7.400-.2 3.600 3.600 0 0 1-.8.100C1.600 12.700 0 11 0 9c0-1.400.7-2.600 1.800-3.200a4.200 4.200 0 0 1-.3-1.600C1.500 1.900 3.400 0 5.800 0c1.300 0 2.500.7 3.300 1.700z" fill="currentColor"/></svg><div class="exp"><svg width="10" height="10" viewBox="0 0 10 10"><path d="M1.6 8.4 L8.4 1.6 M5.8 1.6 H8.4 V4.2 M4.2 8.4 H1.6 V5.8" fill="none" stroke="currentColor" stroke-width="0.95" stroke-linecap="round" stroke-linejoin="round"/></svg></div></div><div class="c1"><span>AlloSales</span></div><div class="c2"><span class="amt"><i>$</i>109,876.78</span></div><div class="c3"></div></div>
</div><div id="lscroll"></div></div>
<div id="lfoot"><svg width="16" height="16" viewBox="0 0 16 16" fill="none" stroke="currentColor" stroke-width="1.300"><rect x="1" y="1" width="14" height="14" rx="1.500"/><path d="M1 5.700h14M1 10.300h14"/></svg><span>Total no. of records: 200</span></div>
</div>
<div id="overlay"></div>
<div id="panel">
<div id="phdr"><span id="pico"><svg width="16" height="13.00" viewBox="0 0 16 13"><path fill="currentColor" d="M0 0h9.600v13H0zM9.600 5.600H16V13H9.600z"/><path d="M3.200 .6v11.800M6.400 .6v11.800M.6 3.200h8.400M.6 6.500h8.400M.6 9.800h8.400M12.900 6.400v6M10.400 9.400h5M9.600 5.200V13M9.600 5.600H16" stroke="#fff" stroke-opacity=".72" stroke-width=".8" fill="none"/></svg></span><span id="ptitle">Flare Tech</span><span id="psub">Account</span><svg id="pclose" width="20" height="20" viewBox="0 0 20 20" fill="none" stroke="currentColor" stroke-width="1.500"><circle cx="10" cy="10" r="8.900"/><path d="M5.700 5.700l8.600 8.600M14.300 5.700l-8.600 8.600"/></svg></div>
<div id="cv"><svg width="14" height="14" viewBox="0 0 14 14" fill="none" stroke="currentColor" stroke-width="1.300"><rect x=".8" y=".8" width="12.400" height="12.400" rx="2.200"/><g fill="currentColor" stroke="none"><circle cx="7" cy="4.200" r=".7"/><circle cx="7" cy="7" r=".7"/><circle cx="7" cy="9.800" r=".7"/><circle cx="4.200" cy="7" r=".7"/><circle cx="9.800" cy="7" r=".7"/></g></svg><span>Card views</span><span id="qm">?</span></div>
<div id="create"><svg width="11" height="11" viewBox="0 0 11 11"><path d="M5.500 1v9M1 5.500h9" stroke="#fff" stroke-width="1.200" stroke-linecap="round"/></svg><span>Create new card</span></div>
<div class="pill" id="p1"><svg width="11" height="13" viewBox="0 0 11 13"><path d="M7.600 .6L1.400 7.400h3.400L3.600 12.400l6-7H6.200z" fill="#fbbf24" stroke="#f59e0b" stroke-width=".7" stroke-linejoin="round"/></svg><span>Overview</span></div><div class="pill" id="p2"><span>Flare_Products</span></div>
<div id="card">
<div id="ctitle">Add existing records</div>
<div class="btn" id="bfields"><svg width="13" height="13" viewBox="0 0 13 13" fill="none" stroke="currentColor" stroke-width="1.200"><rect x=".8" y="1" width="11.400" height="11" rx=".8"/><path d="M4.600 1v11M8.400 1v11"/></svg><span>Fields</span><b>4</b></div><div id="bdiv"></div>
<div class="btn g" id="badd">Add Products</div><div class="btn g" id="bnew">New</div>
<div class="btn" id="btrash"><svg width="14" height="15" viewBox="0 0 14 15" fill="none" stroke="currentColor" stroke-width="1.200" stroke-linecap="round" stroke-linejoin="round"><path d="M1 2.600h12M4.600 2.400L5.200 1.200h3.600l.6 1.200M2.400 2.800v10.400q0 .8.800.8h7.600q.8 0 .8-.8V2.800M5.600 5v6.500M8.400 5v6.500"/></svg></div>
<div id="rtop"></div><div id="rt">
<div class="rrow rh"><div class="d0"></div><div class="d1"><span>Name</span><svg class="sort" width="6" height="13" viewBox="0 0 6 13"><path d="M0.6 3.4 L3 1 L5.4 3.4 M0.6 9.6 L3 12 L5.4 9.6" fill="none" stroke="currentColor" stroke-width="1.25" stroke-linecap="round" stroke-linejoin="round"/></svg></div><div class="d2"><span>Amount</span><svg class="sort" width="6" height="13" viewBox="0 0 6 13"><path d="M0.6 3.4 L3 1 L5.4 3.4 M0.6 9.6 L3 12 L5.4 9.6" fill="none" stroke="currentColor" stroke-width="1.25" stroke-linecap="round" stroke-linejoin="round"/></svg></div><div class="d3"><span>Website</span><svg class="sort" width="6" height="13" viewBox="0 0 6 13"><path d="M0.6 3.4 L3 1 L5.4 3.4 M0.6 9.6 L3 12 L5.4 9.6" fill="none" stroke="currentColor" stroke-width="1.25" stroke-linecap="round" stroke-linejoin="round"/></svg></div><div class="d4"><span>Status</span></div></div>
<div class="rrow" style="top:39px"><div class="d0"></div><div class="d1"><span>FlareKit</span></div><div class="d2"><span class="amt"><i>$</i>52,000</span></div><div class="d3"><span>kit.flare.tech</span><svg class="globe" width="18" height="18" viewBox="0 0 18 18" fill="none" stroke="currentColor" stroke-width="1.15"><circle cx="9" cy="9" r="7.6"/><ellipse cx="9" cy="9" rx="3.3" ry="7.6"/><path d="M1.4 9 H16.6 M2.4 5.2 H15.6 M2.4 12.8 H15.6"/></svg></div><div class="d4"><span>S3 - Demo</span></div></div>
<div class="rrow" style="top:79px"><div class="d0"></div><div class="d1"><span>FlareCode</span></div><div class="d2"><span class="amt"><i>$</i>67,000</span></div><div class="d3"><span>code.flare.tech</span><svg class="globe" width="18" height="18" viewBox="0 0 18 18" fill="none" stroke="currentColor" stroke-width="1.15"><circle cx="9" cy="9" r="7.6"/><ellipse cx="9" cy="9" rx="3.3" ry="7.6"/><path d="M1.4 9 H16.6 M2.4 5.2 H15.6 M2.4 12.8 H15.6"/></svg></div><div class="d4"><span>S3 - Demo</span></div></div>
<div class="rrow" style="top:119px"><div class="d0"></div><div class="d1"><span>FlareSmart</span></div><div class="d2"><span class="amt"><i>$</i>58,250</span></div><div class="d3"><span>cloud.flare.tech</span><svg class="globe" width="18" height="18" viewBox="0 0 18 18" fill="none" stroke="currentColor" stroke-width="1.15"><circle cx="9" cy="9" r="7.6"/><ellipse cx="9" cy="9" rx="3.3" ry="7.6"/><path d="M1.4 9 H16.6 M2.4 5.2 H15.6 M2.4 12.8 H15.6"/></svg></div><div class="d4"><span>S1 - Prospecting</span></div></div>
<div class="rrow" style="top:159px"><div class="d0"></div><div class="d1"><span>FlareSecure</span></div><div class="d2"><span class="amt"><i>$</i>59,500</span></div><div class="d3"><span>vr.flare.tech</span><svg class="globe" width="18" height="18" viewBox="0 0 18 18" fill="none" stroke="currentColor" stroke-width="1.15"><circle cx="9" cy="9" r="7.6"/><ellipse cx="9" cy="9" rx="3.3" ry="7.6"/><path d="M1.4 9 H16.6 M2.4 5.2 H15.6 M2.4 12.8 H15.6"/></svg></div><div class="d4"><span>S2 - Qualification</span></div></div>
<div class="rrow" style="top:199px"><div class="d0"></div><div class="d1"><span>FlareCloud</span></div><div class="d2"><span class="amt"><i>$</i>65,750</span></div><div class="d3"><span>fitness.flare.tech</span><svg class="globe" width="18" height="18" viewBox="0 0 18 18" fill="none" stroke="currentColor" stroke-width="1.15"><circle cx="9" cy="9" r="7.6"/><ellipse cx="9" cy="9" rx="3.3" ry="7.6"/><path d="M1.4 9 H16.6 M2.4 5.2 H15.6 M2.4 12.8 H15.6"/></svg></div><div class="d4"><span>S2 - Qualification</span></div></div>
<div class="rrow" style="top:239px"><div class="d0"></div><div class="d1"><span>FlareVR</span></div><div class="d2"><span class="amt"><i>$</i>48,000</span></div><div class="d3"><span>drive.flare.tech</span><svg class="globe" width="18" height="18" viewBox="0 0 18 18" fill="none" stroke="currentColor" stroke-width="1.15"><circle cx="9" cy="9" r="7.6"/><ellipse cx="9" cy="9" rx="3.3" ry="7.6"/><path d="M1.4 9 H16.6 M2.4 5.2 H15.6 M2.4 12.8 H15.6"/></svg></div><div class="d4"><span>Closed Lost</span></div></div>
<div class="rrow" style="top:279px"><div class="d0"></div><div class="d1"><span>FlareFitness</span></div><div class="d2"><span class="amt"><i>$</i>64,500</span></div><div class="d3"><span>edu.flare.tech</span><svg class="globe" width="18" height="18" viewBox="0 0 18 18" fill="none" stroke="currentColor" stroke-width="1.15"><circle cx="9" cy="9" r="7.6"/><ellipse cx="9" cy="9" rx="3.3" ry="7.6"/><path d="M1.4 9 H16.6 M2.4 5.2 H15.6 M2.4 12.8 H15.6"/></svg></div><div class="d4"><span>S4 - Legal</span></div></div>
<div class="rrow" style="top:319px"><div class="d0"></div><div class="d1"><span>FlareDrive</span></div><div class="d2"><span class="amt"><i>$</i>68,250</span></div><div class="d3"><span>stream.flare.tech</span><svg class="globe" width="18" height="18" viewBox="0 0 18 18" fill="none" stroke="currentColor" stroke-width="1.15"><circle cx="9" cy="9" r="7.6"/><ellipse cx="9" cy="9" rx="3.3" ry="7.6"/><path d="M1.4 9 H16.6 M2.4 5.2 H15.6 M2.4 12.8 H15.6"/></svg></div><div class="d4"><span>Closed Lost</span></div></div>
<div class="rrow" style="top:359px"><div class="d0"></div><div class="d1"><span>FlareEdu</span></div><div class="d2"><span class="amt"><i>$</i>46,500</span></div><div class="d3"><span>pay.flare.tech</span><svg class="globe" width="18" height="18" viewBox="0 0 18 18" fill="none" stroke="currentColor" stroke-width="1.15"><circle cx="9" cy="9" r="7.6"/><ellipse cx="9" cy="9" rx="3.3" ry="7.6"/><path d="M1.4 9 H16.6 M2.4 5.2 H15.6 M2.4 12.8 H15.6"/></svg></div><div class="d4"><span>S1 - Discovery</span></div></div>
<div class="rrow" style="top:399px"><div class="d0"></div><div class="d1"><span>FlareStream</span></div><div class="d2"><span class="amt"><i>$</i>55,750</span></div><div class="d3"><span>chat.flare.tech</span><svg class="globe" width="18" height="18" viewBox="0 0 18 18" fill="none" stroke="currentColor" stroke-width="1.15"><circle cx="9" cy="9" r="7.6"/><ellipse cx="9" cy="9" rx="3.3" ry="7.6"/><path d="M1.4 9 H16.6 M2.4 5.2 H15.6 M2.4 12.8 H15.6"/></svg></div><div class="d4"><span>S1 - Discovery</span></div></div>
<div class="rrow" style="top:439px"><div class="d0"></div><div class="d1"><span>FlarePay</span></div><div class="d2"><span class="amt"><i>$</i>63,250</span></div><div class="d3"><span>health.flare.tech</span><svg class="globe" width="18" height="18" viewBox="0 0 18 18" fill="none" stroke="currentColor" stroke-width="1.15"><circle cx="9" cy="9" r="7.6"/><ellipse cx="9" cy="9" rx="3.3" ry="7.6"/><path d="M1.4 9 H16.6 M2.4 5.2 H15.6 M2.4 12.8 H15.6"/></svg></div><div class="d4"><span>S4 - Legal</span></div></div>
<div class="rrow" style="top:479px"><div class="d0"></div><div class="d1"><span>FlareChat</span></div><div class="d2"><span class="amt"><i>$</i>57,000</span></div><div class="d3"><span>map.flare.tech</span><svg class="globe" width="18" height="18" viewBox="0 0 18 18" fill="none" stroke="currentColor" stroke-width="1.15"><circle cx="9" cy="9" r="7.6"/><ellipse cx="9" cy="9" rx="3.3" ry="7.6"/><path d="M1.4 9 H16.6 M2.4 5.2 H15.6 M2.4 12.8 H15.6"/></svg></div><div class="d4"><span>S4 - Legal</span></div></div>
<div class="rrow" style="top:519px"><div class="d0"></div><div class="d1"><span>FlareHealth</span></div><div class="d2"><span class="amt"><i>$</i>53,250</span></div><div class="d3"><span>music.flare.tech</span><svg class="globe" width="18" height="18" viewBox="0 0 18 18" fill="none" stroke="currentColor" stroke-width="1.15"><circle cx="9" cy="9" r="7.6"/><ellipse cx="9" cy="9" rx="3.3" ry="7.6"/><path d="M1.4 9 H16.6 M2.4 5.2 H15.6 M2.4 12.8 H15.6"/></svg></div><div class="d4"><span>S4 - Legal</span></div></div>
<div class="rrow" style="top:559px"><div class="d0"></div><div class="d1"><span>FlareMap</span></div><div class="d2"><span class="amt"><i>$</i>60,750</span></div><div class="d3"><span>ai.flare.tech</span><svg class="globe" width="18" height="18" viewBox="0 0 18 18" fill="none" stroke="currentColor" stroke-width="1.15"><circle cx="9" cy="9" r="7.6"/><ellipse cx="9" cy="9" rx="3.3" ry="7.6"/><path d="M1.4 9 H16.6 M2.4 5.2 H15.6 M2.4 12.8 H15.6"/></svg></div><div class="d4"><span>S4 - Legal</span></div></div>
<div class="rrow" style="top:599px"><div class="d0"></div><div class="d1"><span>FlareMusic</span></div><div class="d2"><span class="amt"><i>$</i>62,000</span></div><div class="d3"><span>gaming.flare.tech</span><svg class="globe" width="18" height="18" viewBox="0 0 18 18" fill="none" stroke="currentColor" stroke-width="1.15"><circle cx="9" cy="9" r="7.6"/><ellipse cx="9" cy="9" rx="3.3" ry="7.6"/><path d="M1.4 9 H16.6 M2.4 5.2 H15.6 M2.4 12.8 H15.6"/></svg></div><div class="d4"><span>Closed Won</span></div></div>
<div class="rrow rf" style="top:638px"><div class="d0"></div><div class="d1"></div><div class="d2"><span class="up"><svg width="10" height="6" viewBox="0 0 10 6"><path d="M1 5l4-4 4 4" fill="none" stroke="currentColor" stroke-width="1.300" stroke-linecap="round" stroke-linejoin="round"/></svg></span><span class="sum">SUM</span><span class="sv">$8,81,750</span></div><div class="d3"></div><div class="d4"></div></div>
</div>
<div id="rvl"></div><div id="vs"></div><div id="hs"></div>
</div>
</div>
</div></body></html>
